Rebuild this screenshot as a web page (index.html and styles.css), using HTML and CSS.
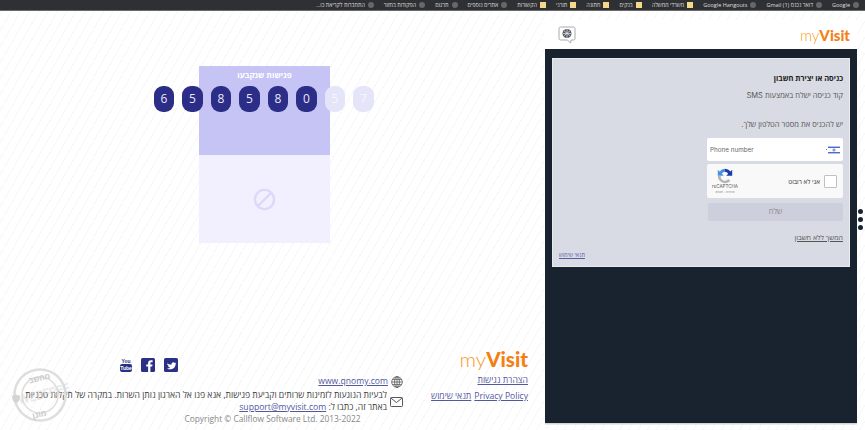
FILE: index.html

```html
<!DOCTYPE html>
<html lang="he">
<head>
	<meta charset="utf-8">
	<title>myVisit</title>
	<link rel="stylesheet" href="styles.css">
</head>
<body>
	<div class="bookmarks" dir="rtl">
		<span class="mark"><i class="globe"></i>Google</span>
		<span class="mark"><i class="globe"></i>דואר נכנס (1) Gmail</span>
		<span class="mark"><i class="globe"></i>Google Hangouts</span>
		<span class="mark"><i class="folder"></i>משרדי ממשלה</span>
		<span class="mark"><i class="folder"></i>בנקים</span>
		<span class="mark"><i class="folder"></i>חתונה</span>
		<span class="mark"><i class="folder"></i>תורני</span>
		<span class="mark"><i class="folder"></i>הקשורות</span>
		<span class="mark"><i class="globe"></i>אתרים נוספים</span>
		<span class="mark"><i class="globe"></i>תרגום</span>
		<span class="mark"><i class="globe"></i>הפקודות בחזור</span>
		<span class="mark"><i class="globe"></i>התחברות לקריאת כו...</span>
	</div>

	<div class="page">
		<div class="left">
			<div class="main">
				<div class="tile">
					<div class="tile-top">פגישות שנקבעו</div>
					<div class="tile-bottom">
						<svg class="ban" viewBox="0 0 24 24"><circle cx="12" cy="12" r="10" /><line x1="5" y1="19" x2="19" y2="5" /></svg>
					</div>
					<div class="digits">
						<span class="digit">6</span>
						<span class="digit">5</span>
						<span class="digit">8</span>
						<span class="digit">5</span>
						<span class="digit">8</span>
						<span class="digit">0</span>
						<span class="digit faded">5</span>
						<span class="digit faded">7</span>
					</div>
				</div>
			</div>

			<div class="footer" dir="rtl">
				<div class="foot-row">
					<div class="foot-links">
						<div class="logo logo-big" dir="ltr"><span>my</span><b>Visit</b></div>
						<a class="link access" href="#">הצהרת נגישות</a>
						<div class="policy">
							<a class="link" href="#">Privacy Policy</a>
							<a class="link" href="#">תנאי שימוש</a>
						</div>
					</div>
					<div class="foot-contact">
						<div class="social">
							<svg class="soc" viewBox="0 0 14 14"><rect width="14" height="14" rx="1.5" fill="#2a3086" /><path d="M3 5.2c2 1.3 3.6 1.4 4.6 1.4-.3-2 2-3 3.3-1.6l1.2-.5-.7 1.2 1-.2-.9 1c0 3.600-4.600 6.200-8.600 3.900 1.300.1 2.300-.2 3.200-.9-1.100-.1-1.800-.7-2.100-1.500h.9c-1.100-.4-1.700-1.200-1.800-2.200l.9.200c-.8-.6-1-1.400-.7-2.200z" fill="#fff" /></svg>
							<svg class="soc" viewBox="0 0 14 14"><rect width="14" height="14" rx="1.500" fill="#2a3086" /><path d="M9.400 14V8.600h1.800l.3-2.100H9.400V5.200c0-.6.200-1 1-1h1.200V2.300c-.2 0-.9-.1-1.700-.1-1.700 0-2.800 1-2.800 2.900v1.400H5.200v2.100h1.900V14z" fill="#fff" /></svg>
							<div class="yt" dir="ltr"><span class="yt-you">You</span><span class="yt-tube">Tube</span></div>
						</div>
						<div class="contact-line web">
							<svg class="ico" viewBox="0 0 12 12"><circle cx="6" cy="6" r="5.300" /><ellipse cx="6" cy="6" rx="2.400" ry="5.300" /><path d="M.7 6h10.600M1.500 3.400h9M1.500 8.600h9M6 .7v10.600" /></svg>
							<a class="link" href="#">www.qnomy.com</a>
						</div>
						<div class="contact-line mail">
							<svg class="ico env" viewBox="0 0 13 10"><rect x=".5" y=".5" width="12" height="9" rx="1" /><path d="M.8 1l5.700 4.500L12.200 1" /></svg>
							<p>לבעיות הנוגעות לזמינות שרותים וקביעת פגישות, אנא פנו אל הארגון נותן השרות. במקרה של תקלות טכניות<br>באתר זה, כתבו ל: <a class="link" href="#">support@myvisit.com</a></p>
						</div>
					</div>
				</div>
				<div class="copyright" dir="ltr">Copyright © Callflow Software Ltd. 2013-2022</div>
			</div>

			<svg class="stamp" viewBox="0 0 70 60">
				<circle cx="30" cy="30" r="25.500" class="ring" />
				<circle cx="30" cy="30" r="18" class="ring thin" />
				<text x="30" y="16" class="st-he" transform="rotate(-14 30 16)">מחשב</text>
				<text x="30" y="52" class="st-he" transform="rotate(-14 30 52)">מוגן</text>
				<text x="35" y="33" class="st-en" transform="rotate(-14 35 33)">WEBFREE</text>
				<path d="M2 31l4-1.500 4 1.500c0 4-1.500 6-4 7.500-2.500-1.500-4-3.500-4-7.500z" fill="#d4d4d4" />
			</svg>
		</div>

		<div class="right" dir="rtl">
			<div class="right-head">
				<div class="logo logo-small" dir="ltr"><span>my</span><b>Visit</b></div>
				<svg class="bubble" viewBox="0 0 18 18">
					<path d="M2.500 1h13a1.500 1.500 0 0 1 1.500 1.500v10a1.500 1.500 0 0 1-1.500 1.500H13l-.5 3-3-3h-7A1.500 1.500 0 0 1 1 12.500v-10A1.500 1.500 0 0 1 2.500 1z" fill="#fff" stroke="#aaa" />
					<circle cx="9" cy="7.500" r="4.500" fill="#555a66" />
					<path d="M5 7.500h8M9 3v9M6 4.800l6 5M12 4.800l-6 5" stroke="#e6e6e6" stroke-width=".7" />
				</svg>
			</div>
			<div class="panel">
				<div class="card">
					<h2>כניסה או יצירת חשבון</h2>
					<p class="sub">קוד כניסה ישלח באמצעות SMS</p>
					<p class="sub ask">יש להכניס את מספר הטלפון שלך.</p>
					<div class="phone">
						<svg class="flag" viewBox="0 0 12 8"><rect width="12" height="8" fill="#fff" /><rect width="12" height="1.300" y=".6" fill="#3a5fc0" /><rect width="12" height="1.300" y="6.100" fill="#3a5fc0" /><path d="M6 2.700l1.300 2.200H4.700zM6 5.300L4.700 3.100h2.600z" fill="none" stroke="#3a5fc0" stroke-width=".4" /></svg>
						<span class="flag-dot"></span>
						<span class="ph-label" dir="ltr">Phone number</span>
					</div>
					<div class="captcha">
						<span class="check"></span>
						<span class="robot">אני לא רובוט</span>
						<div class="rc">
							<svg class="rc-logo" viewBox="0 0 16 16">
								<path d="M8 .8a7.200 7.200 0 0 1 5.500 2.600L15.200 1.700v6h-6l2-2A4.200 4.200 0 0 0 8 3.800z" fill="#1c3aa9" />
								<path d="M8 .8A7.200 7.200 0 0 0 2.500 3.400L.8 1.700v6h6l-2-2A4.200 4.200 0 0 1 8 3.800z" fill="#4a90e2" />
								<path d="M.8 8A7.200 7.200 0 0 0 8 15.200c2.200 0 4-.9 5.200-2.200l-1.900-1.900A4.200 4.200 0 0 1 3.800 8z" fill="#b4b4b4" />
							</svg>
							<span class="rc-name" dir="ltr">reCAPTCHA</span>
							<span class="rc-terms">פרטיות - תנאים</span>
						</div>
					</div>
					<div class="send">שלח</div>
					<a class="skip" href="#">המשך ללא חשבון</a>
					<a class="terms" href="#">תנאי שימוש</a>
				</div>
			</div>
		</div>
		<div class="dots"><i></i><i></i><i></i></div>
	</div>
</body>
</html>
```

FILE: styles.css

```css
html, body {
  margin: 0;
  height: 430px;
  overflow: hidden;
}
body {
  font-family: "Open Sans", "Noto Sans", "Liberation Sans", sans-serif;
  color: #444;
  background-color: #fff;
  background-image: repeating-linear-gradient(120deg, #fff 0, #fff 7px, #f7f7f7 7px, #f7f7f7 8px);
}
p, h2 {
  margin: 0;
}

/* browser bookmarks */
.bookmarks {
  height: 10px;
  background: #2f3034;
  border-bottom: 1px solid #6a6b6e;
  display: flex;
  align-items: center;
  gap: 10px;
  padding-right: 6px;
  font-size: 5.500px;
  color: #dfdfdf;
  white-space: nowrap;
  overflow: hidden;
}
.mark {
  display: flex;
  align-items: center;
  gap: 3px;
}
.globe {
  width: 6px;
  height: 6px;
  border-radius: 50%;
  background: #66676b;
}
.folder {
  width: 6px;
  height: 6px;
  background: #f4d98a;
}

.page {
  display: flex;
  height: 419px;
  position: relative;
}
.left {
  width: 545px;
  display: flex;
  flex-direction: column;
  position: relative;
}
.main {
  flex: 1;
  padding: 55px 0 0 199px;
}

/* appointments tile */
.tile {
  width: 131px;
  height: 177px;
  position: relative;
}
.tile-top {
  height: 89px;
  background: #c5c4f5;
  color: #fff;
  font-size: 8px;
  font-weight: 700;
  text-align: center;
  padding-top: 3px;
  box-sizing: border-box;
}
.tile-bottom {
  height: 88px;
  background: #f2f0fe;
  display: flex;
  align-items: center;
  justify-content: center;
}
.ban {
  width: 23px;
  height: 23px;
  fill: none;
  stroke: #dcd9f8;
  stroke-width: 2.500;
}
.digits {
  position: absolute;
  left: -45.300px;
  top: 20px;
  display: flex;
  gap: 7.800px;
}
.digit {
  width: 20.700px;
  height: 25.700px;
  border-radius: 9px;
  background: #2b2d87;
  color: #e8e8f8;
  font-size: 12px;
  line-height: 25.700px;
  text-align: center;
}
.digit.faded {
  background: #e5e5fa;
  color: #f6f6fd;
}

/* footer */
.footer {
  padding-right: 17px;
  height: 81px;
}
.foot-row {
  display: flex;
  height: 64px;
}
.foot-links {
  width: 125px;
  flex: none;
  display: flex;
  flex-direction: column;
  align-items: flex-start;
}
.logo {
  font-family: Lato, "Open Sans", sans-serif;
  color: #f79a1e;
  line-height: 1;
}
.logo span {
  font-weight: 300;
}
.logo b {
  font-weight: 900;
  color: #f47f12;
}
.logo-big {
  font-size: 20.500px;
  height: 21px;
}
.logo-small {
  font-size: 15px;
}
.link {
  color: #54589f;
}
.access {
  font-size: 8.600px;
  margin-top: 4px;
}
.policy {
  font-size: 8.600px;
  margin-top: 4px;
  display: flex;
  gap: 3px;
}
.foot-contact {
  font-size: 8.600px;
  line-height: 11.500px;
  white-space: nowrap;
  color: #3c3c3c;
}
.social {
  display: flex;
  gap: 9px;
  margin: 9px 225px 0 0;
  height: 14px;
}
.soc {
  width: 14px;
  height: 14px;
}
.yt {
  width: 12px;
  text-align: center;
  color: #2a3086;
  font-family: "Liberation Sans", sans-serif;
  font-weight: 700;
  display: flex;
  flex-direction: column;
  align-items: center;
}
.yt-you {
  font-size: 5px;
  line-height: 6px;
}
.yt-tube {
  background: #2a3086;
  color: #fff;
  font-size: 5px;
  line-height: 8px;
  width: 12px;
  border-radius: 2px;
}
.contact-line {
  display: flex;
  gap: 3px;
  align-items: center;
}
.web {
  margin-top: 4px;
}
.mail {
  margin-top: 2px;
}
.ico {
  width: 12px;
  height: 12px;
  fill: none;
  stroke: #444;
  stroke-width: .7;
  flex: none;
}
.env {
  width: 13px;
  height: 10px;
  stroke-width: .9;
}
.copyright {
  font-size: 8.350px;
  color: #888;
  text-align: center;
  padding-left: 17px;
  line-height: 12px;
}
.stamp {
  position: absolute;
  left: 10px;
  top: 354px;
  width: 70px;
  height: 60px;
}
.ring {
  fill: none;
  stroke: #dedede;
  stroke-width: 2.500;
}
.ring.thin {
  stroke-width: 1.500;
}
.st-he {
  font-size: 8px;
  font-weight: 700;
  fill: #cccccc;
  text-anchor: middle;
}
.st-en {
  font-size: 12px;
  fill: none;
  stroke: #d8d8d8;
  stroke-width: .4;
  text-anchor: middle;
}

/* login column */
.right {
  width: 312px;
  flex: none;
}
.right-head {
  height: 29px;
  margin-top: 9px;
  background: #fff;
  display: flex;
  align-items: center;
  padding: 1px 7px 0 13px;
  justify-content: space-between;
  box-sizing: border-box;
}
.bubble {
  width: 18px;
  height: 18px;
}
.panel {
  height: 374px;
  background: #18232f;
  padding: 9px 7px 0;
  box-sizing: border-box;
  font-family: Inter, "Open Sans", sans-serif;
  box-shadow: 0 1.500px 0 #d5d5d5;
}
.card {
  height: 209px;
  background: #d8dbe3;
  box-sizing: border-box;
  border: 1px solid #e8eaef;
  padding: 14px 6px 0;
  position: relative;
  font-size: 7.500px;
  color: #555;
}
.card h2 {
  font-size: 7.500px;
  font-weight: 700;
  color: #222;
  line-height: 11px;
}
.sub {
  margin-top: 6px;
  line-height: 11px;
}
.ask {
  margin-top: 18px;
}
.phone {
  width: 136px;
  height: 23px;
  margin-top: 8px;
  background: #fff;
  border-radius: 2px;
  display: flex;
  align-items: center;
  padding: 0 3px;
  box-sizing: border-box;
  gap: 1px;
}
.flag {
  width: 12px;
  height: 8px;
}
.flag-dot {
  width: 1.500px;
  height: 1.500px;
  border-radius: 50%;
  background: #555;
}
.ph-label {
  margin-right: auto;
  font-size: 6.300px;
  color: #666;
}
.captcha {
  width: 136px;
  height: 34px;
  margin-top: 3px;
  background: #f9f9f9;
  border-radius: 2px;
  display: flex;
  align-items: center;
  padding: 0 6px 0 5px;
  box-sizing: border-box;
  gap: 4px;
}
.check {
  width: 13px;
  height: 13px;
  background: #fff;
  border: 1px solid #c1c1c1;
  border-radius: 1px;
  box-sizing: border-box;
}
.robot {
  font-size: 6.300px;
  color: #333;
}
.rc {
  margin-right: auto;
  display: flex;
  flex-direction: column;
  align-items: center;
  width: 26px;
}
.rc-logo {
  width: 16px;
  height: 16px;
}
.rc-name {
  font-size: 4.500px;
  line-height: 6px;
  color: #555;
}
.rc-terms {
  font-size: 3px;
  line-height: 5px;
  color: #777;
}
.send {
  width: 135px;
  height: 18px;
  margin-top: 5px;
  background: #cdd0dc;
  border-radius: 2px;
  color: #888;
  font-size: 7.500px;
  line-height: 18px;
  text-align: center;
}
.skip {
  display: block;
  margin-top: 12px;
  color: #555;
  font-size: 7px;
  line-height: 10px;
}
.terms {
  position: absolute;
  left: 6px;
  bottom: 7px;
  font-size: 5.500px;
  color: #5a5ea5;
}
.dots {
  position: absolute;
  left: 858px;
  top: 198px;
  display: flex;
  flex-direction: column;
  gap: 3px;
}
.dots i {
  width: 5px;
  height: 5px;
  border-radius: 50%;
  background: #1a2533;
}
```
